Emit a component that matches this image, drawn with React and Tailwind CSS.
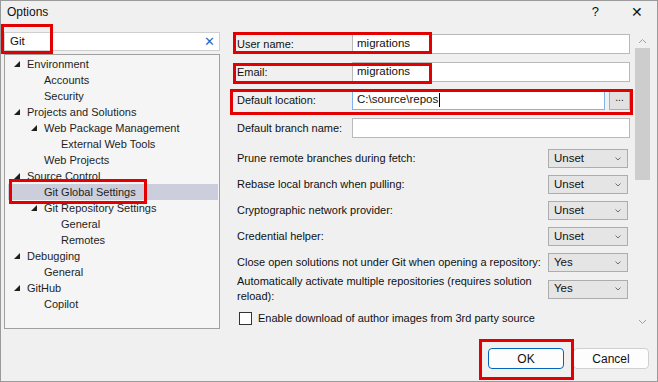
import React from 'react';

const tree = [
  { label: 'Environment', level: 0, open: true },
  { label: 'Accounts', level: 1 },
  { label: 'Security', level: 1 },
  { label: 'Projects and Solutions', level: 0, open: true },
  { label: 'Web Package Management', level: 1, open: true },
  { label: 'External Web Tools', level: 2 },
  { label: 'Web Projects', level: 1 },
  { label: 'Source Control', level: 0, open: true },
  { label: 'Git Global Settings', level: 1, selected: true },
  { label: 'Git Repository Settings', level: 1, open: true },
  { label: 'General', level: 2 },
  { label: 'Remotes', level: 2 },
  { label: 'Debugging', level: 0, open: true },
  { label: 'General', level: 1 },
  { label: 'GitHub', level: 0, open: true },
  { label: 'Copilot', level: 1 },
];

const pads = ['pl-[6px]', 'pl-[23px]', 'pl-[40px]'];

const dropdowns = [
  { label: 'Prune remote branches during fetch:', value: 'Unset' },
  { label: 'Rebase local branch when pulling:', value: 'Unset' },
  { label: 'Cryptographic network provider:', value: 'Unset' },
  { label: 'Credential helper:', value: 'Unset' },
  { label: 'Close open solutions not under Git when opening a repository:', value: 'Yes' },
];

const Tri = () => (
  <svg width="6" height="6" viewBox="0 0 6 6" className="shrink-0">
    <polygon points="6,0 6,6 0,6" fill="#1e1e1e" />
  </svg>
);

const Chevron = ({ up = false, className = '' }) => (
  <svg width="9" height="6" viewBox="0 0 9 6" className={className}>
    <polyline
      points={up ? '1,5 4.5,1.5 8,5' : '1,1 4.5,4.5 8,1'}
      fill="none"
      stroke="#a0a0a0"
      strokeWidth="1"
    />
  </svg>
);

const Select = ({ value }) => (
  <div className="w-[80px] h-[19px] shrink-0 flex items-center justify-between pl-[5px] pr-[6px] border border-[#adadad] bg-[#e5e5e5] text-[#111] text-[11.5px]">
    <span>{value}</span>
    <svg width="6" height="4" viewBox="0 0 6 4">
      <polyline points="0.5,0.5 3,3 5.5,0.5" fill="none" stroke="#707070" strokeWidth="1" />
    </svg>
  </div>
);

const TextRow = ({ label, value, children, focus = false }) => (
  <div className="flex items-center h-[20px]">
    <div className="w-[119px] pl-[4px] shrink-0 whitespace-nowrap">{label}</div>
    <div
      className={`flex-1 h-[20px] bg-white flex items-center pl-[4px] border text-[11.5px] ${
        focus ? 'border-[#7eb4ea]' : 'border-[#b9b9b9]'
      }`}
    >
      {value}
      {focus && <span className="w-px h-[14px] bg-black ml-px" />}
    </div>
    {children}
  </div>
);

const RedBox = ({ className }) => (
  <div className={`absolute border-[3px] border-[#e30000] pointer-events-none ${className}`} />
);

export default function App() {
  return (
    <div className="relative w-[658px] h-[382px] bg-[#f0f0f0] border border-[#9a9a9a] flex flex-col text-[11px] leading-none text-[#111] font-['Liberation_Sans',sans-serif] overflow-hidden">
      {/* title bar */}
      <div className="h-[21px] flex items-center pl-[6px] pr-[14px] shrink-0">
        <span className="text-[12px]">Options</span>
        <span className="ml-auto mr-[32px] text-[13px]">?</span>
        <span className="text-[14px] font-light">✕</span>
      </div>

      <div className="flex h-[307px] pt-[10px]">
        {/* left column */}
        <div className="w-[216px] ml-[3px] flex flex-col shrink-0">
          <div className="h-[19px] bg-white border border-[#cfcfcf] flex items-center pl-[5px] pr-[4px] text-[11.5px]">
            <span>Git</span>
            <span className="ml-auto text-[#1c6fc0] text-[13px] leading-none">✕</span>
          </div>
          <div className="mt-[3px] flex-1 bg-[#f5f5f5] border border-[#a0a0a0] pt-px pr-px">
            {tree.map((n, i) => (
              <div
                key={i}
                className={`ml-[3px] h-[16px] flex items-center ${pads[n.level]} ${
                  n.selected ? 'bg-[#cccedb]' : ''
                }`}
              >
                <span className="w-[13px] shrink-0 flex items-center">{n.open && <Tri />}</span>
                <span className="text-[#1e1e1e] whitespace-nowrap">{n.label}</span>
              </div>
            ))}
          </div>
        </div>

        {/* right form */}
        <div className="w-[400px] ml-[13px] pt-[2px] shrink-0">
          <TextRow label="User name:" value="migrations">
            <div className="w-[3px]" />
          </TextRow>
          <div className="mt-[8px]">
            <TextRow label="Email:" value="migrations">
              <div className="w-[3px]" />
            </TextRow>
          </div>
          <div className="mt-[8px]">
            <TextRow label="Default location:" value="C:\source\repos" focus>
              <div className="w-[21px] h-[20px] ml-[4px] mr-[3px] border border-[#adadad] bg-[#e1e1e1] flex items-center justify-center text-[10px] pb-[4px]">
                ...
              </div>
            </TextRow>
          </div>
          <div className="mt-[8px]">
            <TextRow label="Default branch name:" value="">
              <div className="w-[3px]" />
            </TextRow>
          </div>

          <div className="mt-[11px] flex flex-col gap-[7px] pr-[5px]">
            {dropdowns.map((d) => (
              <div key={d.label} className="flex items-center h-[19px]">
                <div className="flex-1 min-w-0 pl-[4px] whitespace-nowrap">{d.label}</div>
                <Select value={d.value} />
              </div>
            ))}
          </div>
          <div className="flex items-center pr-[5px] mt-[2px]">
            <div className="flex-1 min-w-0 pl-[4px] leading-[15px] whitespace-nowrap">
              Automatically activate multiple repositories (requires solution
              <br />
              reload):
            </div>
            <Select value="Yes" />
          </div>
          <div className="flex items-center mt-[8px] pl-[6px]">
            <div className="w-[13px] h-[13px] border border-[#333] bg-white shrink-0" />
            <span className="ml-[6px] whitespace-nowrap">Enable download of author images from 3rd party source</span>
          </div>
        </div>

        {/* scrollbar */}
        <div className="w-[17px] ml-px flex flex-col items-center shrink-0">
          <Chevron up className="mt-[6px]" />
          <div className="w-[15px] h-[132px] bg-[#cdcdcd] mt-[4px]" />
          <Chevron className="mt-auto mb-[4px]" />
        </div>
      </div>

      {/* buttons */}
      <div className="flex justify-end items-center pr-[8px] mt-[19px]">
        <button className="w-[76px] h-[21px] rounded-[4px] border border-[#0067c0] bg-[#fdfdfd] text-[12px]">
          OK
        </button>
        <button className="w-[76px] h-[21px] ml-[9px] rounded-[4px] border border-[#d0d0d0] bg-[#fdfdfd] text-[12px]">
          Cancel
        </button>
      </div>

      {/* annotation boxes */}
      <RedBox className="left-0 top-[23px] w-[52px] h-[30px]" />
      <RedBox className="left-[8px] top-[178px] w-[138px] h-[25px]" />
      <RedBox className="left-[232px] top-[31px] w-[199px] h-[22px]" />
      <RedBox className="left-[232px] top-[62px] w-[199px] h-[21px]" />
      <RedBox className="left-[229px] top-[88px] w-[403px] h-[26px]" />
      <RedBox className="left-[478px] top-[338px] w-[95px] h-[41px]" />
    </div>
  );
}
